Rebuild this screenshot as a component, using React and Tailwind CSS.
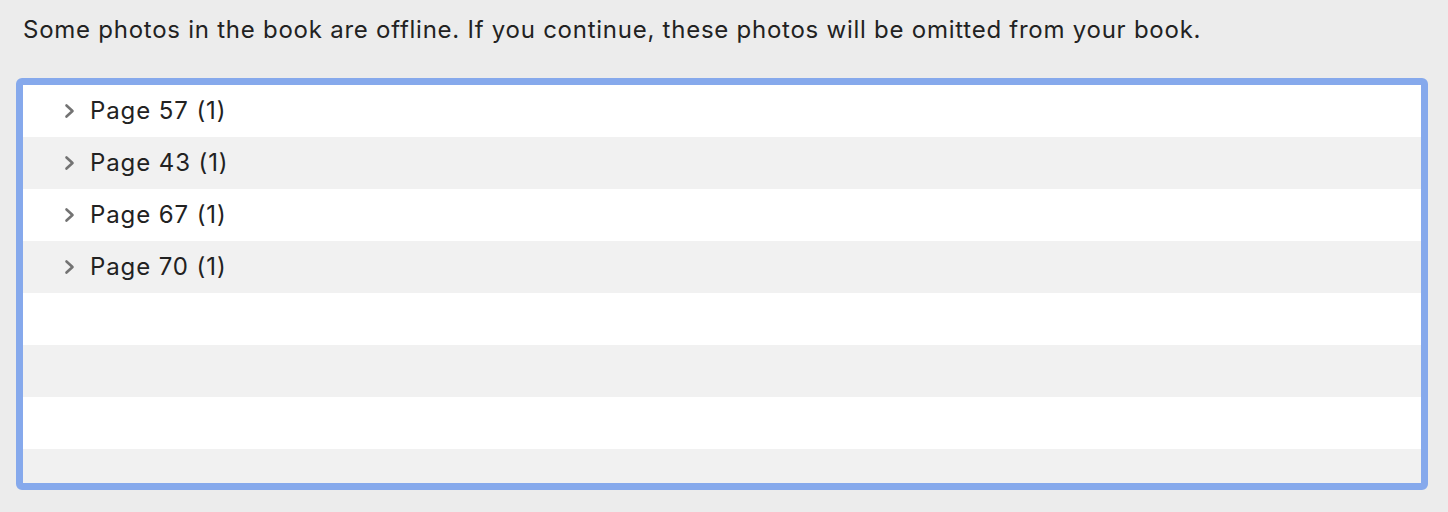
import React from 'react';

const pages = ['Page 57 (1)', 'Page 43 (1)', 'Page 67 (1)', 'Page 70 (1)'];
const rowCount = 8;

const Chevron = () => (
  <svg width="13" height="18" viewBox="0 0 13 18" className="shrink-0">
    <path d="M3.5 3.5 L9.5 9 L3.5 14.5" fill="none" stroke="#737373" strokeWidth="2.6" strokeLinecap="round" strokeLinejoin="round" />
  </svg>
);

export default function App() {
  const rows = Array.from({ length: rowCount }, (_, i) => pages[i] || null);

  return (
    <div className="w-[1448px] h-[512px] bg-[#ececec] overflow-hidden font-['Inter',sans-serif] text-[#222222]">
      <p className="pl-[23px] pt-[15px] text-[24px] leading-[30px] tracking-[0.75px]">
        Some photos in the book are offline. If you continue, these photos will be omitted from your book.
      </p>

      <div className="mt-[33px] ml-[16px] w-[1412px] h-[412px] rounded-[6px] border-[7px] border-[#86a9ec] overflow-hidden bg-white">
        {rows.map((label, i) => (
          <div
            key={i}
            className={`h-[52px] flex items-center ${i % 2 === 0 ? 'bg-white' : 'bg-[#f1f1f1]'}`}
          >
            {label && (
              <div className="flex items-center pl-[40px] gap-[14px]">
                <Chevron />
                <span className="text-[24px] leading-[30px] tracking-[0.9px]">{label}</span>
              </div>
            )}
          </div>
        ))}
      </div>
    </div>
  );
}
